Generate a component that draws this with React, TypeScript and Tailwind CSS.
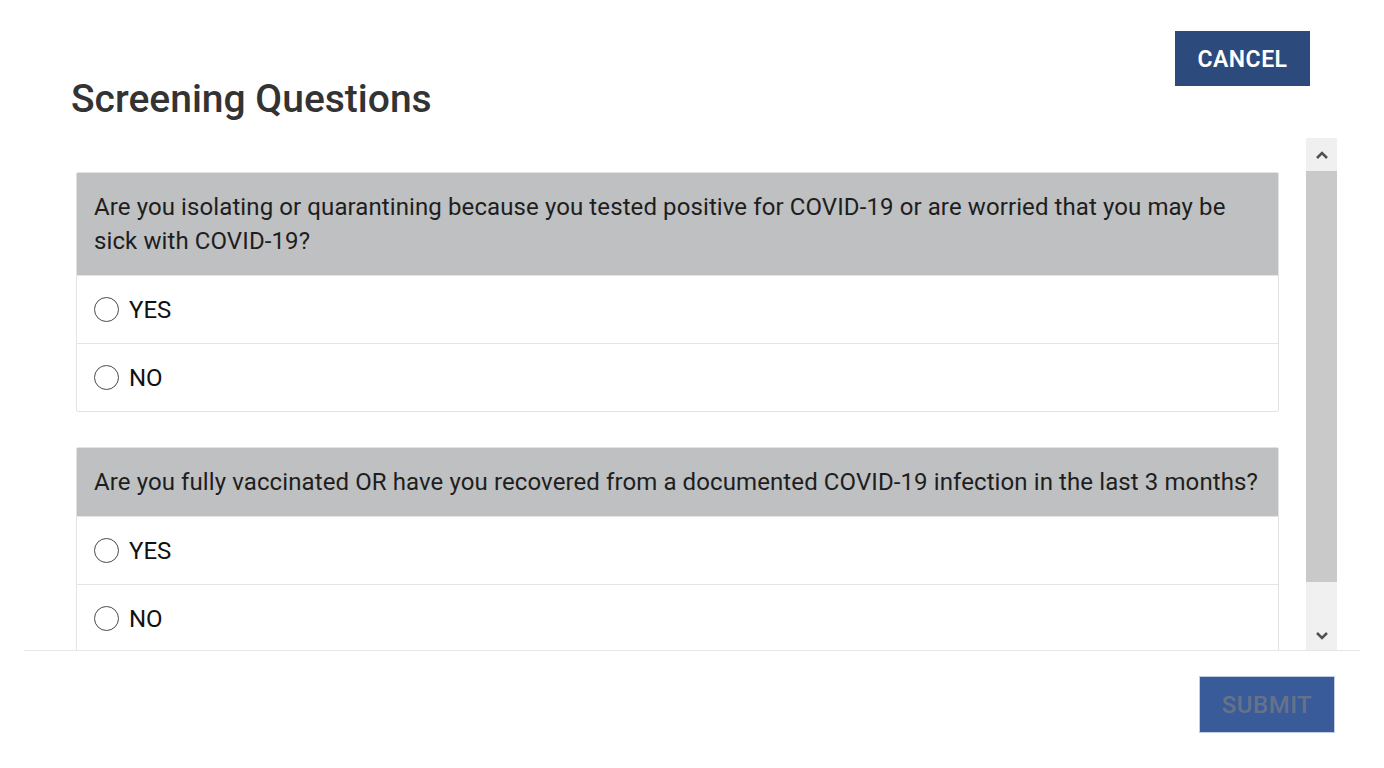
const questions = [
  {
    id: "q1",
    text: "Are you isolating or quarantining because you tested positive for COVID-19 or are worried that you may be sick with COVID-19?",
  },
  {
    id: "q2",
    text: "Are you fully vaccinated OR have you recovered from a documented COVID-19 infection in the last 3 months?",
  },
];

function Radio({ label }: { label: string }) {
  return (
    <label className="flex items-center h-[68px] pl-[17px] border-t border-[#e4e4e4] first:border-t-0">
      <span className="w-[25px] h-[25px] rounded-full border-[1.5px] border-[#4a4a4a] bg-white" />
      <span className="ml-[10px] text-[24px] leading-none text-[#111]">{label}</span>
    </label>
  );
}

export default function App() {
  return (
    <div
      className="w-[1384px] h-[768px] bg-white overflow-hidden"
      style={{ fontFamily: "Roboto, 'Liberation Sans', sans-serif" }}
    >
      {/* Header */}
      <div className="flex justify-between items-start pl-[71px] pr-[74px] pt-[31px]">
        <h1 className="mt-[49px] text-[39px] leading-[38px] font-medium text-[#333]">
          Screening Questions
        </h1>
        <button className="w-[135px] h-[55px] pt-[3px] bg-[#2d4a7d] text-white text-[23px] font-semibold tracking-[0.5px]">
          CANCEL
        </button>
      </div>

      {/* Scroll area */}
      <div className="mt-[18px] mx-[24px] h-[515px] border-b border-[#e6e6e6] flex items-end">
        <div className="pl-[52px] pt-[36px] w-[1255px] h-[514px] overflow-hidden flex flex-col gap-[35px]">
          {questions.map((q) => (
            <div key={q.id} className="w-[1203px] shrink-0 border border-[#e3e3e3] rounded-[2px]">
              <div className="bg-[#bfc0c2] pl-[17px] pr-[14px] py-[17px] text-[24px] leading-[34px] tracking-[0.1px] text-[#1e1e1e]">
                {q.text}
              </div>
              <Radio label="YES" />
              <Radio label="NO" />
            </div>
          ))}
        </div>
        {/* Scrollbar */}
        <div className="ml-[27px] w-[31px] h-[512px] bg-[#f0f0f0] flex flex-col">
          <div className="h-[33px] flex items-center justify-center">
            <svg width="14" height="10" viewBox="0 0 14 10">
              <path d="M2 8 L7 3 L12 8" fill="none" stroke="#505050" strokeWidth="2.5" />
            </svg>
          </div>
          <div className="h-[411px] bg-[#c9c9c9]" />
          <div className="flex-1 flex items-end justify-center pb-[9px]">
            <svg width="14" height="10" viewBox="0 0 14 10">
              <path d="M2 2 L7 7 L12 2" fill="none" stroke="#505050" strokeWidth="2.5" />
            </svg>
          </div>
        </div>
      </div>

      {/* Footer */}
      <div className="flex justify-end pr-[49px] pt-[25px]">
        <button className="w-[136px] h-[57px] bg-[#3a5b99] border border-[#c3cde2] text-[#67728a] text-[24px] font-medium tracking-[0.5px]">
          SUBMIT
        </button>
      </div>
    </div>
  );
}
